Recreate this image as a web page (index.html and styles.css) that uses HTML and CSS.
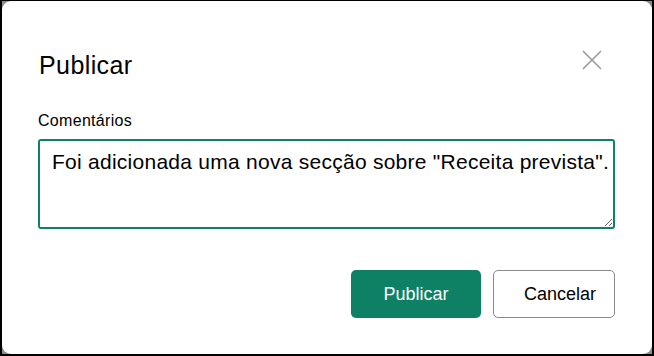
FILE: index.html
```html
<!DOCTYPE html>
<html lang="pt">
<head>
    <meta charset="UTF-8">
    <title>Publicar</title>
    <link rel="stylesheet" href="styles.css">
</head>
<body>
    <div class="frame">
        <div class="backdrop">
            <div class="dialog">
                <div class="head">
                    <h1 class="title">Publicar</h1>
                    <button class="close" aria-label="Fechar">
                        <svg width="20" height="20" viewBox="0 0 20 20">
                            <path d="M1 1 L19 19 M19 1 L1 19" stroke="#9a9a9a" stroke-width="1.6" fill="none"/>
                        </svg>
                    </button>
                </div>
                <label class="label" for="comments">Comentários</label>
                <textarea id="comments" class="comments">Foi adicionada uma nova secção sobre "Receita prevista".</textarea>
                <div class="actions">
                    <button class="btn btn-primary">Publicar</button>
                    <button class="btn btn-secondary">Cancelar</button>
                </div>
            </div>
        </div>
    </div>
</body>
</html>
```

FILE: styles.css
```css
html, body {
    margin: 0;
    height: 100%;
}
body {
    background: #000;
    font-family: "Liberation Sans", Arial, sans-serif;
    color: #000;
}
.frame {
    height: 100%;
    box-sizing: border-box;
    padding: 1px 2px 2px 2px;
}
.backdrop {
    height: 100%;
    background: #8c8c8c;
}
.dialog {
    height: 100%;
    box-sizing: border-box;
    background: #fff;
    border-radius: 9px;
    padding: 49px 37px 0 36px;
    display: flex;
    flex-direction: column;
}
.head {
    display: flex;
    justify-content: space-between;
    align-items: flex-start;
}
.title {
    margin: 0 0 0 1px;
    font-size: 25px;
    line-height: 30px;
    font-weight: normal;
    letter-spacing: 0.4px;
}
.close {
    border: 0;
    background: none;
    padding: 0;
    margin: 0 13px 0 0;
    width: 20px;
    height: 20px;
}
.close svg {
    display: block;
}
.label {
    margin-top: 31px;
    font-size: 16px;
    line-height: 20px;
    letter-spacing: 0.3px;
}
.comments {
    margin-top: 8px;
    height: 90px;
    box-sizing: border-box;
    border: 2px solid #0e8064;
    border-radius: 3px;
    padding: 8px 0 8px 12px;
    font-family: "Liberation Sans", Arial, sans-serif;
    font-size: 21px;
    line-height: 26px;
    letter-spacing: 0.26px;
    color: #000;
    outline: none;
    resize: vertical;
}
.actions {
    display: flex;
    justify-content: flex-end;
    gap: 12px;
    margin-top: 41px;
}
.btn {
    height: 48px;
    border-radius: 5px;
    font-family: "Liberation Sans", Arial, sans-serif;
    font-size: 18px;
    padding: 0;
}
.btn-primary {
    width: 130px;
    background: #0e8064;
    border: 0;
    color: #fff;
}
.btn-secondary {
    width: 122px;
    padding-left: 12px;
    background: #fff;
    border: 1px solid #8a8a8a;
    color: #000;
}
```
